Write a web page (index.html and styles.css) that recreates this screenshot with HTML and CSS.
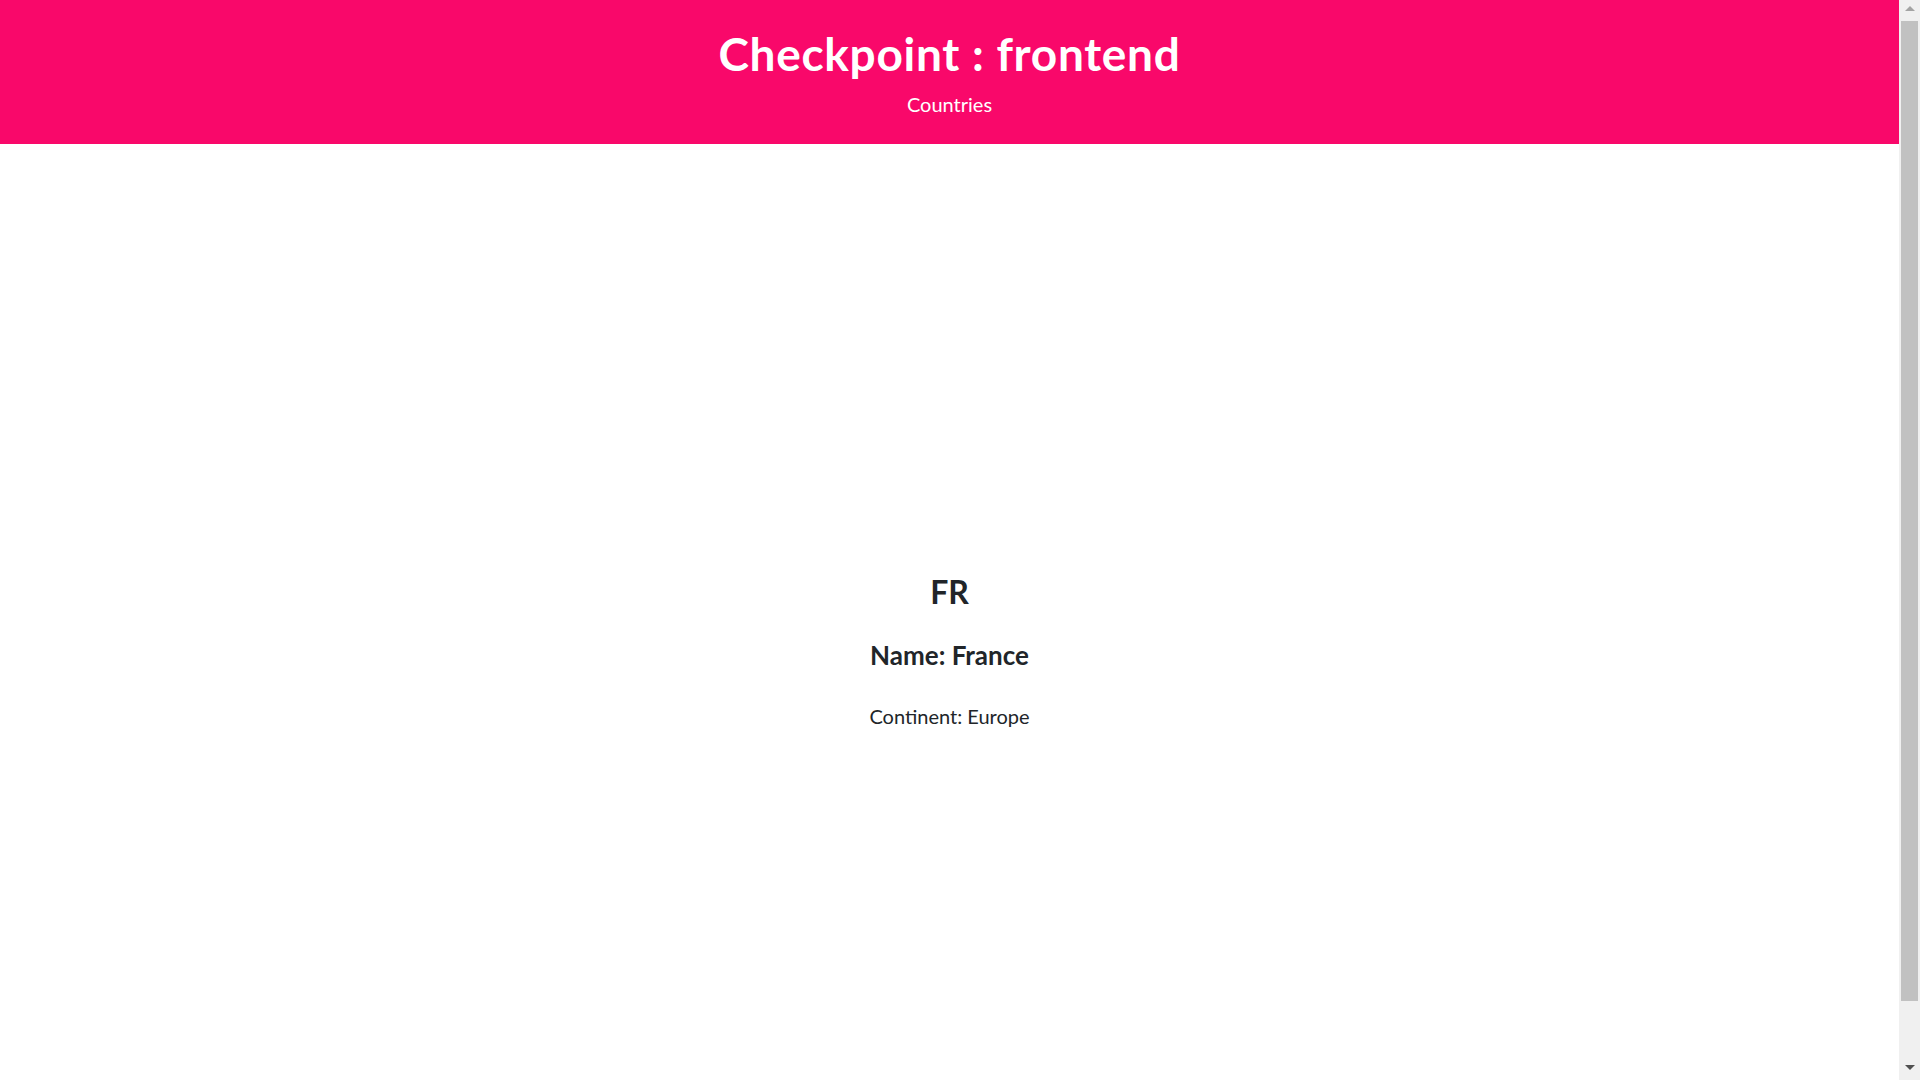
FILE: index.html
```html
<!DOCTYPE html>
<html lang="en">
<head>
<meta charset="utf-8">
<title>Checkpoint : frontend</title>
<link rel="stylesheet" href="styles.css">
</head>
<body>
<header class="banner">
  <h1 class="banner-title">Checkpoint : frontend</h1>
  <p class="banner-lead">Countries</p>
</header>
<main class="country">
  <div class="country-card">
    <h2 class="country-code">FR</h2>
    <h4 class="country-name">Name: France</h4>
    <p class="country-continent">Continent: Europe</p>
  </div>
</main>
<div class="fake-scrollbar" aria-hidden="true">
  <span class="sb-arrow sb-up"></span>
  <span class="sb-track"><span class="sb-thumb"></span></span>
  <span class="sb-arrow sb-down"></span>
</div>
</body>
</html>
```
FILE: styles.css
```css
* { box-sizing: border-box; }
html, body { margin: 0; padding: 0; }
body {
  font-family: "Lato", "Open Sans", sans-serif;
  color: #212529;
  background: #fff;
  padding-right: 21px;
}

.banner {
  background: #f9086a;
  color: #fff;
  text-align: center;
  height: 144px;
  padding-top: 25.6px;
}
.banner-title {
  margin: 0;
  font-size: 46px;
  font-weight: 700;
  line-height: 1.2;
  letter-spacing: 0.7px;
}
.banner-lead {
  margin: 11.5px 0 0;
  font-size: 20px;
  line-height: 1.2;
}
.country {
  min-height: 1016px;
  display: flex;
  align-items: center;
  justify-content: center;
  text-align: center;
}
.country-code {
  margin: 0 0 29px;
  font-size: 32px;
  font-weight: 700;
  line-height: 1.2;
}
.country-name {
  margin: 0 0 30px;
  font-size: 26px;
  font-weight: 700;
  line-height: 1.2;
}
.country-continent {
  margin: 0;
  font-size: 20px;
  line-height: 1.5;
}

.fake-scrollbar {
  position: fixed;
  top: 0;
  right: 0;
  width: 21px;
  height: 100vh;
  background: #f0f0f0;
  display: flex;
  flex-direction: column;
  align-items: center;
}
.sb-arrow {
  height: 17px;
  width: 100%;
  display: flex;
  align-items: center;
  justify-content: center;
}
.sb-arrow::before {
  content: "";
  width: 0;
  height: 0;
  border-left: 5px solid transparent;
  border-right: 5px solid transparent;
}
.sb-up::before { border-bottom: 5px solid #a3a3a3; }
.sb-down::before { border-top: 5px solid #505050; }
.sb-down { margin-bottom: 4px; }
.sb-track {
  flex: 1;
  width: 100%;
  padding: 4px 2px 0;
}
.sb-thumb {
  display: block;
  height: 980px;
  background: #c1c1c1;
}
```
